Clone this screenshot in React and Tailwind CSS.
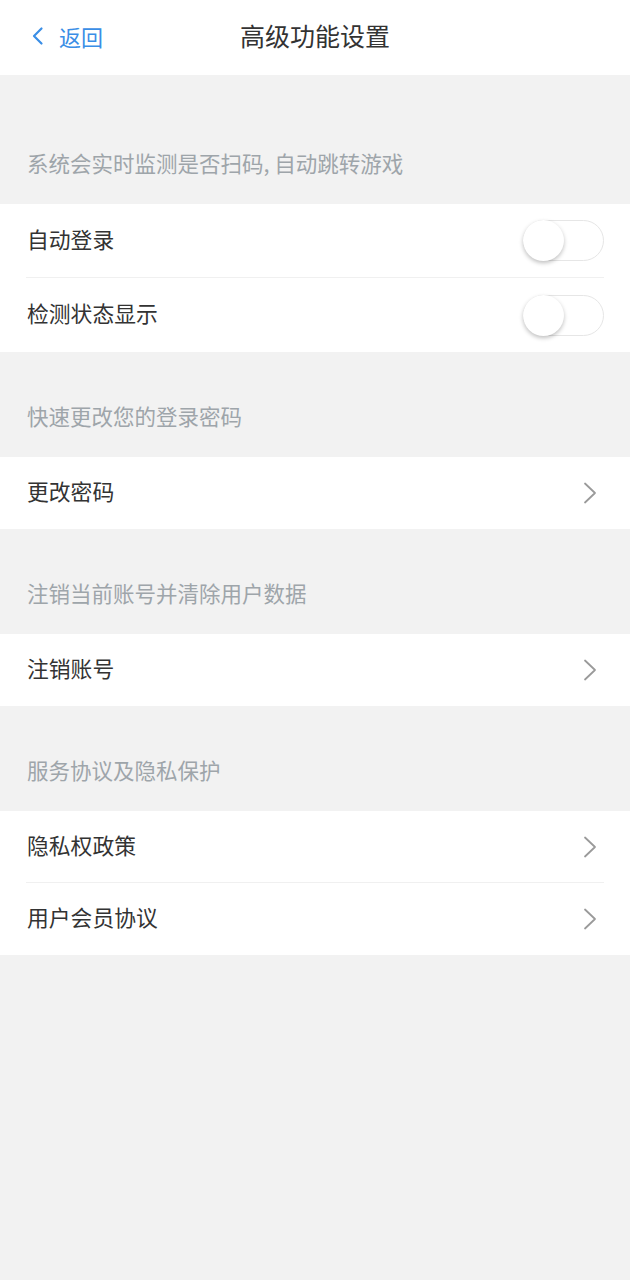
const font = { fontFamily: '"Noto Sans CJK SC", "Noto Sans", sans-serif' };

// 开关（关闭状态）
function Toggle() {
  return (
    <div className="relative w-[81px] h-[41px] rounded-full border border-[#e6e6e6] bg-white">
      <div className="absolute -left-px -top-px w-[41px] h-[41px] rounded-full bg-white shadow-[0_2px_4px_rgba(0,0,0,0.25)]" />
    </div>
  );
}

function Arrow() {
  return (
    <svg width="14" height="22" viewBox="0 0 14 22" fill="none" className="mr-[7px]">
      <polyline points="2,1.5 12,11 2,20.5" stroke="#9a9a9a" strokeWidth="1.8" strokeLinecap="round" strokeLinejoin="round" />
    </svg>
  );
}

function Row({ label, toggle, divider }) {
  return (
    <div className="px-[26px]">
      <div className={`flex items-center justify-between ${toggle ? 'h-[74px]' : 'h-[72px]'} ${divider ? 'border-b border-[#f0f0f0]' : ''}`}>
        <span className="text-[21.8px] leading-[30px] pb-[4px] pl-px text-[#333333]">{label}</span>
        {toggle ? <Toggle /> : <Arrow />}
      </div>
    </div>
  );
}

function SectionLabel({ text, first }) {
  return (
    <div className={`px-[27px] pb-[28px] ${first ? 'pt-[74px]' : 'pt-[50px]'}`}>
      <p className="text-[21.5px] leading-[27px] text-[#9ea5aa]">{text}</p>
    </div>
  );
}

export default function App() {
  return (
    <main className="min-h-[1280px] bg-[#f2f2f2]" style={font}>
      <header className="relative flex items-center justify-center h-[75px] bg-white pb-[3px]">
        <button className="absolute left-[31px] top-0 h-full pb-[3px] flex items-center text-[#3a8ee6]">
          <svg width="13" height="20" viewBox="0 0 13 20" fill="none" className="mr-[15px]">
            <polyline points="10.5,2.5 3,10 10.5,17.5" stroke="#3a8ee6" strokeWidth="2.2" strokeLinecap="round" strokeLinejoin="round" />
          </svg>
          <span className="text-[22px]">返回</span>
        </button>
        <h1 className="text-[25px] text-[#333333]">高级功能设置</h1>
      </header>

      <SectionLabel text="系统会实时监测是否扫码, 自动跳转游戏" first />
      <div className="bg-white">
        <Row label="自动登录" toggle divider />
        <Row label="检测状态显示" toggle />
      </div>

      <SectionLabel text="快速更改您的登录密码" />
      <div className="bg-white">
        <Row label="更改密码" />
      </div>

      <SectionLabel text="注销当前账号并清除用户数据" />
      <div className="bg-white">
        <Row label="注销账号" />
      </div>

      <SectionLabel text="服务协议及隐私保护" />
      <div className="bg-white">
        <Row label="隐私权政策" divider />
        <Row label="用户会员协议" />
      </div>
    </main>
  );
}
